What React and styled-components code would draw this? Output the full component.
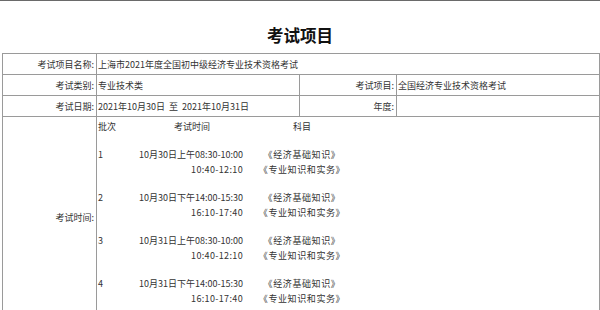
import React from "react";
import styled, { createGlobalStyle } from "styled-components";

const Global = createGlobalStyle`
  html, body { margin: 0; padding: 0; background: #fff; }
  body { font-family: "Noto Sans CJK SC", "Liberation Sans", sans-serif; color: #333; }
`;

const Page = styled.div`
  width: 600px;
  border-top: 1px solid #6a6a6a;
`;

const Title = styled.h1`
  margin: 24px 0 8px;
  font-size: 16.5px;
  line-height: 20px;
  font-weight: bold;
  text-align: center;
  color: #111;
`;

const Grid = styled.div`
  margin-left: 2px;
  width: 598px;
  box-sizing: border-box;
  display: grid;
  grid-template-columns: 94px 203px 97px 203px;
  grid-template-rows: 21px 21px 21px auto;
  border-top: 1px solid #9a9a9a;
  border-left: 1px solid #9a9a9a;
`;

const Cell = styled.div`
  box-sizing: border-box;
  border-right: 1px solid #9a9a9a;
  border-bottom: 1px solid #9a9a9a;
  display: flex;
  align-items: ${(p) => (p.$top ? "flex-start" : "center")};
  justify-content: ${(p) => (p.$label ? "flex-end" : "flex-start")};
  padding: ${(p) => (p.$label ? "0 2px 0 0" : p.$top ? "2px 0 12px 1px" : "0 0 0 1px")};
  grid-column: ${(p) => p.$span || "auto"};
  font-size: 9px;
  line-height: 15px;
  white-space: nowrap;
  color: #333;
`;

const Schedule = styled.div`
  display: grid;
  grid-template-columns: 39px 110px 110px;
  row-gap: 13px;
  font-size: 9px;
  line-height: 15px;
`;

const Col = styled.div`
  display: flex;
  flex-direction: column;
  align-items: ${(p) => p.$align || "flex-start"};
  padding-right: ${(p) => (p.$align === "flex-end" ? "4px" : "0")};
`;

const Clock = styled.span`
  letter-spacing: ${(p) => (p.$short ? "0.35px" : "0")};
`;

const Subject = styled.span`
  letter-spacing: 0.6px;
`;

const groups = [
  { n: "1", t1: "10月30日上午08:30-10:00", t2: "10:40-12:10" },
  { n: "2", t1: "10月30日下午14:00-15:30", t2: "16:10-17:40" },
  { n: "3", t1: "10月31日上午08:30-10:00", t2: "10:40-12:10" },
  { n: "4", t1: "10月31日下午14:00-15:30", t2: "16:10-17:40" },
];

export default function App() {
  return (
    <>
      <Global />
      <Page>
        <Title>考试项目</Title>
        <Grid>
          <Cell $label>考试项目名称:</Cell>
          <Cell $span="span 3">上海市2021年度全国初中级经济专业技术资格考试</Cell>

          <Cell $label>考试类别:</Cell>
          <Cell>专业技术类</Cell>
          <Cell $label>考试项目:</Cell>
          <Cell>全国经济专业技术资格考试</Cell>

          <Cell $label>考试日期:</Cell>
          <Cell>2021年10月30日&nbsp;&nbsp;至&nbsp;&nbsp;2021年10月31日</Cell>
          <Cell $label>年度:</Cell>
          <Cell></Cell>

          <Cell $label>考试时间:</Cell>
          <Cell $span="span 3" $top>
            <Schedule>
              <Col>批次</Col>
              <Col $align="center">考试时间</Col>
              <Col $align="center">科目</Col>
              {groups.map((g) => (
                <React.Fragment key={g.n}>
                  <Col>{g.n}</Col>
                  <Col $align="flex-end">
                    <Clock>{g.t1}</Clock>
                    <Clock $short>{g.t2}</Clock>
                  </Col>
                  <Col $align="center">
                    <Subject>《经济基础知识》</Subject>
                    <Subject>《专业知识和实务》</Subject>
                  </Col>
                </React.Fragment>
              ))}
            </Schedule>
          </Cell>
        </Grid>
      </Page>
    </>
  );
}
